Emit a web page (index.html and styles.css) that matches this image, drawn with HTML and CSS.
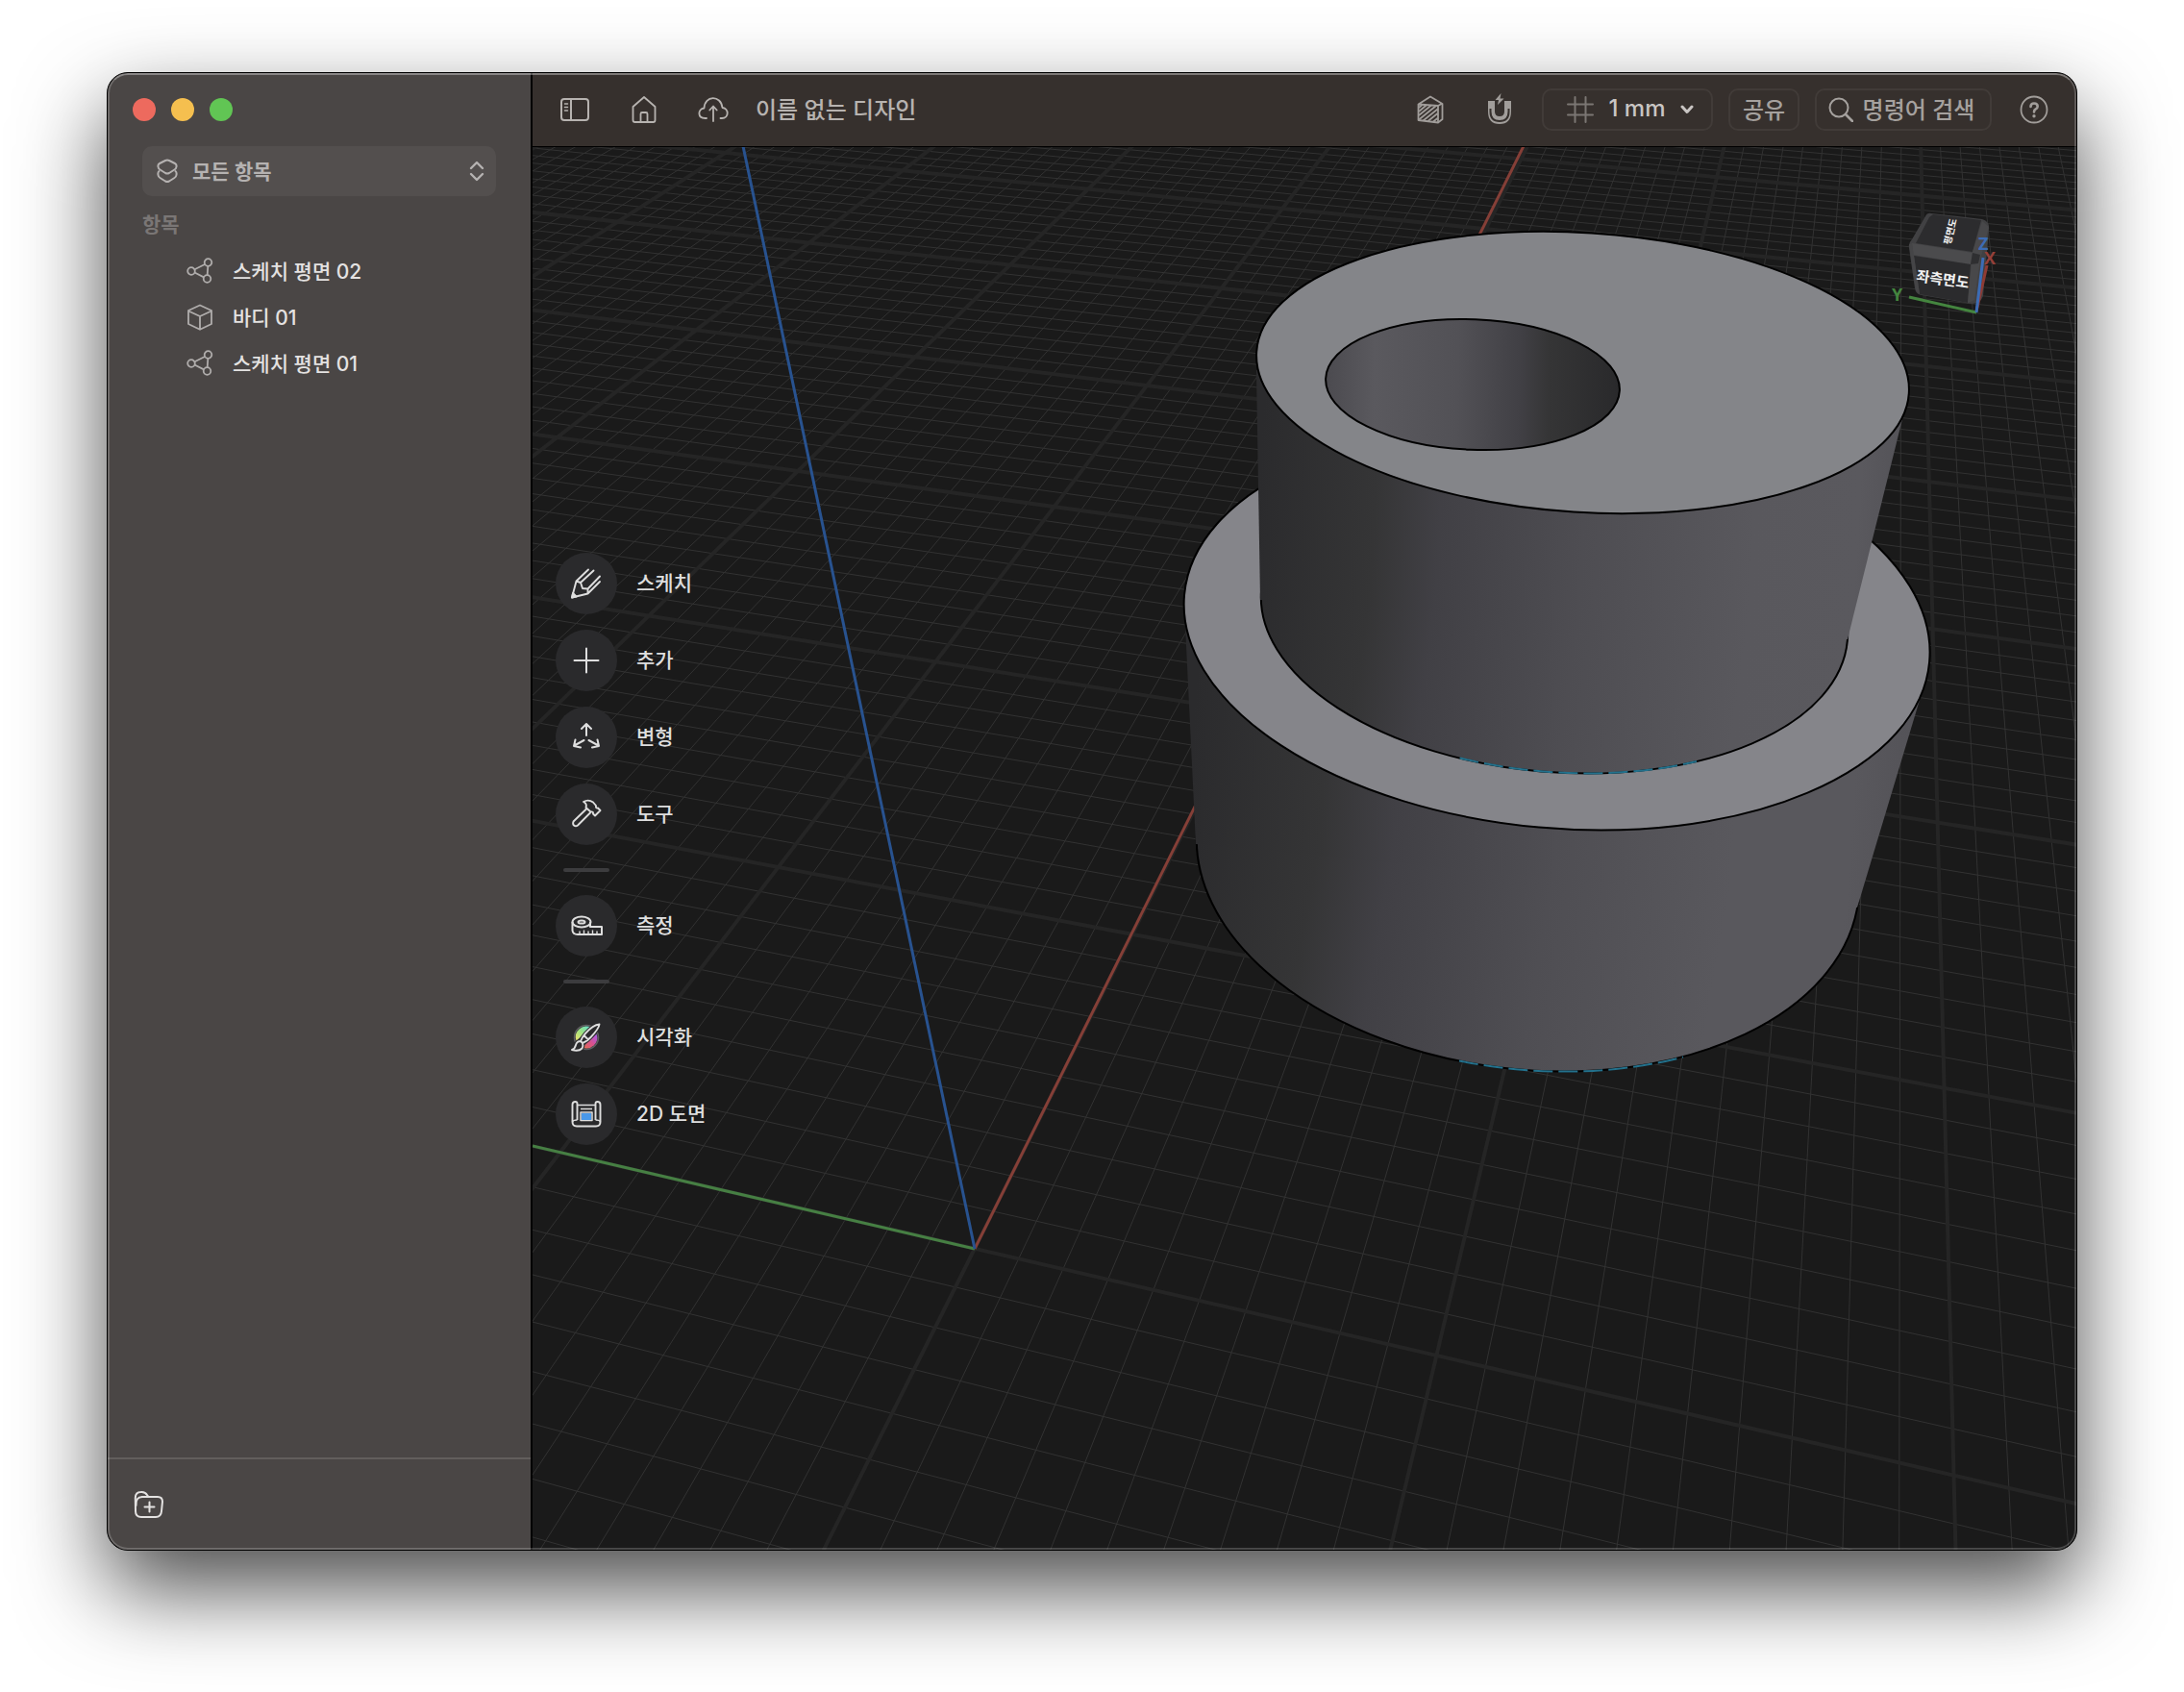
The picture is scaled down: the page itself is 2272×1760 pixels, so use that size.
FILE: index.html
```html
<!DOCTYPE html>
<html lang="ko">
<head>
<meta charset="utf-8">
<title>이름 없는 디자인</title>
<link rel="stylesheet" href="styles.css">
</head>
<body>
<div class="window">
  <aside class="sidebar">
    <div class="traffic">
      <button class="light light-close" aria-label="닫기"></button>
      <button class="light light-min" aria-label="최소화"></button>
      <button class="light light-zoom" aria-label="확대"></button>
    </div>
    <div class="filter">
      <svg class="filter-icon" width="22" height="26" viewBox="0 0 22 26" fill="none" stroke="currentColor" stroke-width="2" stroke-linejoin="round" stroke-linecap="round"><path d="M9 2 Q11 1 13 2 L19 5 Q21 6 20.500 8.500 Q20.300 10.500 18.500 11.500 L13 15 Q11 16 9 15 L3.500 11.500 Q1.700 10.500 1.500 8.500 Q1 6 3 5 Z"/><path d="M2.500 13 Q1 14 1.500 17 Q1.700 19 3.500 20 L9 23.500 Q11 24.500 13 23.500 L18.500 20 Q20.300 19 20.500 17 Q21 14 19.500 13"/></svg>
      <select class="filter-select" aria-label="항목 필터"><option>모든 항목</option></select>
      <svg class="filter-arrows" width="16" height="22" viewBox="0 0 16 22" fill="none" stroke="currentColor" stroke-width="2.400" stroke-linejoin="round" stroke-linecap="round"><path d="M2 8 L8 2 L14 8 M2 14 L8 20 L14 14"/></svg>
    </div>
    <h2 class="section-title">항목</h2>
    <ul class="items">
      <li class="item"><svg width="28" height="28" viewBox="0 0 28 28" fill="none" stroke="currentColor" stroke-width="1.800"><circle cx="5" cy="14" r="3.800"/><circle cx="22.500" cy="5" r="3.800"/><circle cx="21.500" cy="22" r="3.800"/><path d="M8.500 12.300 L19 7 M8.500 15.500 L18 20.400 M22.300 9 L21.700 18"/></svg><span>스케치 평면 02</span></li>
      <li class="item"><svg width="28" height="28" viewBox="0 0 28 28" fill="none" stroke="currentColor" stroke-width="1.800" stroke-linejoin="round"><path d="M14 1.500 L26 7 V21 L14 26.800 L2 21 V7 Z M2 7.500 L14 13 L26 7.500 M14 13 V26.500"/></svg><span>바디 01</span></li>
      <li class="item"><svg width="28" height="28" viewBox="0 0 28 28" fill="none" stroke="currentColor" stroke-width="1.800"><circle cx="5" cy="14" r="3.800"/><circle cx="22.500" cy="5" r="3.800"/><circle cx="21.500" cy="22" r="3.800"/><path d="M8.500 12.300 L19 7 M8.500 15.500 L18 20.400 M22.300 9 L21.700 18"/></svg><span>스케치 평면 01</span></li>
    </ul>
    <footer class="sidebar-footer">
      <button class="plain-button" aria-label="폴더 추가"><svg width="32" height="30" viewBox="0 0 32 30" fill="none" stroke="currentColor" stroke-width="2" stroke-linecap="round" stroke-linejoin="round"><path d="M9 7 H25 Q30 7 30 12 L29 22 Q28.500 28 23 28 H8 Q2 28 2 22 L1.800 8 Q2 2 7.500 2 Q12 1.500 14 5 L15.500 7"/><path d="M2.500 16 Q2 7 9 7 M11.500 17.500 H21.500 M16.500 12.500 V22.500"/></svg></button>
    </footer>
  </aside>

  <main class="main">
    <header class="toolbar">
      <button class="icon-button" aria-label="사이드바"><svg width="30" height="24" viewBox="0 0 30 24" fill="none" stroke="currentColor" stroke-width="2" stroke-linecap="round"><rect x="1" y="1" width="28" height="22" rx="3"/><path d="M11 1 V23"/><path d="M4.500 6 H7.500 M4.500 9.500 H7.500 M4.500 13 H7.500" stroke-width="1.500"/></svg></button>
      <button class="icon-button" aria-label="홈"><svg width="26" height="30" viewBox="0 0 26 30" fill="none" stroke="currentColor" stroke-width="1.800" stroke-linejoin="round"><path d="M1.500 12 L13 2 L24.500 12 V26 Q24.500 28 22.500 28 H3.500 Q1.500 28 1.500 26 Z"/><path d="M9.500 28 V19.500 Q9.500 18 11 18 H15 Q16.500 18 16.500 19.500 V28"/></svg></button>
      <button class="icon-button" aria-label="업로드"><svg width="32" height="28" viewBox="0 0 32 28" fill="none" stroke="currentColor" stroke-width="1.800" stroke-linecap="round" stroke-linejoin="round"><path d="M9 23 H7.500 C-0.500 23 -0.500 13.500 6.500 12.500 C7 -1 24 -1.500 25.500 12 C32.500 13 32.500 23 25 23 H23.500"/><path d="M16 26 V11 M12.300 14.500 L16 10.500 L19.700 14.500"/></svg></button>
      <h1 class="title">이름 없는 디자인</h1>
      <button class="icon-button icon-dim" aria-label="단면 보기"><svg width="28" height="30" viewBox="0 0 28 30" fill="none" stroke="currentColor" stroke-width="1.800" stroke-linejoin="round"><path d="M1.500 9.500 L14 1.500 L26.500 9 V25 L22 28.500 L1.500 26 Z M1.500 9.500 L22 11 L26.500 8.500"/><path d="M22 11 V28 M2 13 L5.500 10 M2 17 L10 10.300 M2 21 L15 10.500 M2 25.500 L20 11 M6.500 26.500 L21.500 14.500 M11.500 27 L21.500 19 M17 27.500 L21.500 24"/></svg></button>
      <button class="icon-button icon-dim" aria-label="스냅"><svg width="28" height="34" viewBox="0 0 28 34"><path d="M15.500 0 L9.500 7 H13 L12 12 L18.500 5.500 H14.500 Z" fill="currentColor"/><path d="M2 8 H9 V19 Q9 24 14 24 Q19 24 19 19 V8 H26 V19 Q26 32 14 32 Q2 32 2 19 Z" fill="currentColor"/><path d="M4.500 16 V19 Q4.500 29 14 29 Q23.500 29 23.500 19 V16" fill="none" stroke="#36302d" stroke-width="2"/></svg></button>
      <button class="box-button grid-button"><svg width="30" height="30" viewBox="0 0 30 30" fill="none" stroke="currentColor" stroke-width="2" stroke-linecap="round"><path d="M9.500 2 V28 M20.500 2 V28 M2 9.500 H28 M2 20.500 H28"/></svg><span class="label">1 mm</span><svg width="14" height="10" viewBox="0 0 14 10" fill="none" stroke="currentColor" stroke-width="3" stroke-linecap="round" stroke-linejoin="round"><path d="M2 2 L7 7.500 L12 2"/></svg></button>
      <button class="box-button share-button"><span class="label">공유</span></button>
      <button class="box-button search-button"><svg width="26" height="26" viewBox="0 0 26 26" fill="none" stroke="currentColor" stroke-width="2" stroke-linecap="round"><circle cx="11" cy="11" r="9.500"/><path d="M18 18 L25 25" stroke-width="2.600"/></svg><span class="label">명령어 검색</span></button>
      <button class="icon-button icon-dim" aria-label="도움말"><svg width="30" height="30" viewBox="0 0 30 30" fill="none" stroke="currentColor" stroke-width="1.800" stroke-linecap="round"><circle cx="15" cy="15" r="13.500"/><path d="M11.500 12 Q11.500 8.500 15 8.500 Q18.700 8.500 18.700 11.800 Q18.700 13.500 16.500 14.700 Q15 15.500 15 17.500" stroke-width="2.600"/><circle cx="15" cy="21.700" r="1" stroke-width="1.400" fill="currentColor"/></svg></button>
    </header>

    <section class="viewport">
      <svg class="scene" viewBox="554 153 1606 1459" preserveAspectRatio="xMidYMid slice" aria-hidden="true">
        <defs>
          <linearGradient id="wallSmall" gradientUnits="userSpaceOnUse" x1="1305" y1="580" x2="1983" y2="620">
            <stop offset="0" stop-color="#2b2b2d"/><stop offset=".18" stop-color="#353536"/><stop offset=".28" stop-color="#414045"/><stop offset=".5" stop-color="#4e4d52"/><stop offset=".76" stop-color="#59585d"/><stop offset=".92" stop-color="#5a595e"/><stop offset="1" stop-color="#525156"/>
          </linearGradient>
          <linearGradient id="wallBig" gradientUnits="userSpaceOnUse" x1="1235" y1="870" x2="2000" y2="915">
            <stop offset="0" stop-color="#2b2b2d"/><stop offset=".18" stop-color="#353536"/><stop offset=".28" stop-color="#414045"/><stop offset=".5" stop-color="#4f4e53"/><stop offset=".74" stop-color="#59585d"/><stop offset=".9" stop-color="#59585d"/><stop offset="1" stop-color="#525156"/>
          </linearGradient>
          <linearGradient id="wallHole" gradientUnits="userSpaceOnUse" x1="1378" y1="405" x2="1685" y2="395">
            <stop offset="0" stop-color="#4b4a4f"/><stop offset=".17" stop-color="#5a595e"/><stop offset=".45" stop-color="#525156"/><stop offset=".66" stop-color="#414045"/><stop offset=".76" stop-color="#353536"/><stop offset="1" stop-color="#29292b"/>
          </linearGradient>
        </defs>
        <path id="grid-minor" class="grid-minor"/>
        <path id="grid-major" class="grid-major"/>
        <path class="axis axis-y" d="M554 1192 L1014 1299"/>
        <path class="axis axis-x" d="M1014 1299 L1585 152"/>
        <path class="axis axis-z" d="M1014 1299 L773 152"/>
        <g class="body">
          <ellipse class="edge" cx="1589.500" cy="897" rx="346" ry="215.300" transform="rotate(6.420 1589.500 897)" fill="url(#wallBig)"/>
          <path d="M1233 650 L1244 878 L1932 944 L1997 728 L2000 700 Z" fill="url(#wallBig)"/>
          <path class="hint" d="M1518 1103.500 A346 215.300 6.420 0 0 1751 1099.500"/>
          <ellipse class="edge" cx="1619.600" cy="653.500" rx="389.100" ry="207.900" transform="rotate(5.160 1619.600 653.500)" fill="#85858a"/>
          <ellipse class="edge" cx="1617" cy="640" rx="306" ry="163" transform="rotate(4.900 1617 640)" fill="url(#wallSmall)"/>
          <path d="M1307 385 L1311 624 L1922 665 L1981 428 Z" fill="url(#wallSmall)"/>
          <path class="hint" d="M1518.600 788.500 A306 163 4.900 0 0 1765 792"/>
          <ellipse class="edge" cx="1646.500" cy="387.500" rx="340" ry="145.300" transform="rotate(3.640 1646.500 387.500)" fill="#848589"/>
          <ellipse class="edge" cx="1532" cy="400" rx="153" ry="67.800" transform="rotate(2.370 1532 400)" fill="url(#wallHole)"/>
        </g>
      </svg>

      <nav class="tools">
        <button class="tool"><span class="tool-disc"><svg width="36" height="36" viewBox="0 0 36 36" fill="none" stroke="currentColor" stroke-width="1.900" stroke-linecap="round" stroke-linejoin="round"><path d="M20 3.500 L7.500 15.500 L3 32.500 L19.500 28.500 L32 16 M25.500 4.500 L12 17 L14 23 L19.500 23.500 L32 10.500 M7.500 15.500 L12 17 M19.500 23.500 V28.500"/><path d="M3 32.500 L4 28 L7.500 31.500 Z" fill="currentColor"/></svg></span><span>스케치</span></button>
        <button class="tool"><span class="tool-disc"><svg width="36" height="36" viewBox="0 0 36 36" fill="none" stroke="currentColor" stroke-width="2" stroke-linecap="round"><path d="M18 5.500 V30.500 M5.500 18 H30.500"/></svg></span><span>추가</span></button>
        <button class="tool"><span class="tool-disc"><svg width="36" height="36" viewBox="0 0 36 36" fill="none" stroke="currentColor" stroke-width="2" stroke-linecap="round" stroke-linejoin="round"><path d="M18 16 V4.500 M13 9 L18 4 L23 9 M15.500 21 L5.500 26.500 M6.500 20.500 L5 27 L12 28.500 M20.500 21 L30.500 26.500 M29.500 20.500 L31 27 L24 28.500"/></svg></span><span>변형</span></button>
        <button class="tool"><span class="tool-disc"><svg width="36" height="36" viewBox="0 0 36 36" fill="none" stroke="currentColor" stroke-width="1.900" stroke-linecap="round" stroke-linejoin="round"><path d="M18 12.500 L4.500 25.500 Q3.500 28 5 29.500 Q7 31 9 29.500 L22 16.500"/><path d="M15 5 Q20 2 25 5.500 L28 9 Q27.500 12 30 11.500 L32.500 14 L27 19.500 L25 17.500 Q25.500 15 22.500 15.500 L17.500 11 Q19 7 15 5 Z"/></svg></span><span>도구</span></button>
        <hr class="tool-rule">
        <button class="tool"><span class="tool-disc"><svg width="36" height="36" viewBox="0 0 36 36" fill="none" stroke="currentColor" stroke-width="2" stroke-linejoin="round"><ellipse cx="13" cy="14" rx="9.500" ry="5.500"/><ellipse cx="13" cy="14" rx="3.500" ry="1.600"/><path d="M3.500 14 V23 Q4 27 9 27 H34 V19 H22 V14"/><path d="M11 27 V23.500 M15.500 27 V22.500 M20 27 V23.500 M24.500 27 V22.500 M29 27 V23.500" stroke-width="1.400"/></svg></span><span>측정</span></button>
        <hr class="tool-rule">
        <button class="tool"><span class="tool-disc"><svg width="36" height="36" viewBox="0 0 36 36" stroke-linejoin="round">
          <defs><linearGradient id="warm" x1="0" y1="1" x2="1" y2="0"><stop offset="0" stop-color="#f2e36b"/><stop offset=".5" stop-color="#9be383"/><stop offset="1" stop-color="#5fd9d3"/></linearGradient><linearGradient id="cool" x1="0" y1="1" x2="1" y2="0"><stop offset="0" stop-color="#e5704a"/><stop offset=".5" stop-color="#d8518f"/><stop offset="1" stop-color="#a45cf0"/></linearGradient></defs>
          <circle cx="18" cy="18" r="12.500" fill="#3a3a3c" stroke="#5e5e61" stroke-width="1.500"/>
          <path d="M7.500 21.500 A11 11 0 0 1 23 8 Z" fill="url(#warm)"/><path d="M28.500 14.500 A11 11 0 0 1 14 28.500 Z" fill="url(#cool)"/>
          <path d="M31.500 4.500 Q25 5 17 14 Q13.500 18 12 22 Q8 22 7 26 Q6 30 3 31 Q10 33 13.500 29.500 Q15 27 14 24 Q19 22 22.500 18 Q31 9 31.500 4.500 Z" fill="#2b2b2d" stroke="#2b2b2d" stroke-width="4"/>
          <path d="M31.500 4.500 Q25 5 17 14 Q13.500 18 12 22 Q8 22 7 26 Q6 30 3 31 Q10 33 13.500 29.500 Q15 27 14 24 Q19 22 22.500 18 Q31 9 31.500 4.500 Z M12 22 L14 24 M15.500 16 L20 20.500" fill="none" stroke="currentColor" stroke-width="1.900"/></svg></span><span>시각화</span></button>
        <button class="tool"><span class="tool-disc"><svg width="36" height="36" viewBox="0 0 36 36" fill="none" stroke="currentColor" stroke-width="1.900" stroke-linejoin="round"><path d="M8.500 24 V7 Q8.500 5 6.500 5 Q3.500 5 3.500 8 V26 Q3.500 30.500 8 30.500 H28 Q32.500 30.500 32.500 26 V8 Q32.500 5 29.500 5 Q27.500 5 27.500 7 V24"/><path d="M3.500 26 Q4 24 8.500 24 M32.500 26 Q32 24 27.500 24 M8.500 8.500 H27.500 M12 12.500 H24 M12 24.500 V16 H24 V24.500 Z" stroke-width="1.500"/><rect x="13" y="17" width="10" height="7" fill="#4a98e8" stroke="none"/></svg></span><span>2D 도면</span></button>
      </nav>

      <svg class="view-cube" width="120" height="120" viewBox="0 0 120 120" role="img" aria-label="보기 방향">
        <path d="M47 12 L100 18 Q108 20 107 29 L101 98 Q98 106 89 106 L37 97 Q31 96 30 90 L24 48 Q23 43 27 39 L41 15 Q43 11 47 12 Z" fill="#414143"/>
        <path d="M49 13 L99 19 L90 52 L31 43 L45 16 Z" fill="#2c2c2e"/>
        <path d="M27 43 L90 53 L88 65 L28 55 Z" fill="#4b4b4d"/>
        <path d="M29 56 L88 65 L85 105 L35 96 Z" fill="#2b2b2d"/>
        <path d="M24 44 L27 43 L29 56 L35 96 L31 92 Z" fill="#454547"/>
        <path d="M90 52 L100 20 L107 26 L98 60 L92 102 L85 105 Z" fill="#48484a"/>
        <path d="M90 53 L98 55 L96 64 L88 65 Z" fill="#2f2f31"/>
        <text class="cube-text" x="31" y="82" transform="rotate(8 31 82)">좌측면도</text>
        <text class="cube-text cube-top" x="67" y="45" transform="rotate(-76 67 45)">평면도</text>
        <path d="M94 114 L105 66" stroke="#8f3b34" stroke-width="3"/>
        <path d="M24 99 L94 115" stroke="#44853f" stroke-width="3"/>
        <path d="M94 115 L101 58" stroke="#3c6cb5" stroke-width="3"/>
        <text class="axis-text" x="102" y="65" fill="#94403a">X</text>
        <text class="axis-text" x="96" y="50" fill="#3c6cb5">Z</text>
        <text class="axis-text" x="6" y="103" fill="#44853f">Y</text>
      </svg>
    </section>
  </main>
</div>
<script src="grid.js"></script>
</body>
</html>
```
FILE: styles.css
```css
* { box-sizing: border-box; }

html, body { margin: 0; }

body {
  display: flex;
  min-height: 100vh;
  padding: 75px 111px 147px;
  background: #fff;
  font-family: Inter, "Noto Sans CJK KR", sans-serif;
  color: #e4e2e1;
}

button, select {
  margin: 0;
  padding: 0;
  border: 0;
  background: none;
  color: inherit;
  font: inherit;
}

svg { display: block; flex: none; }

.window {
  position: relative;
  display: flex;
  flex: 1;
  overflow: hidden;
  border: 1px solid #000;
  border-radius: 22px;
  background: #000;
  box-shadow: 0 40px 90px rgba(0, 0, 0, .7);
}

/* light rim drawn over the window's content */
.window::after {
  content: "";
  position: absolute;
  inset: 0;
  border: 2px solid rgba(255, 255, 255, .2);
  border-top-color: rgba(255, 255, 255, .35);
  border-radius: 21px;
  pointer-events: none;
}

/* sidebar */
.sidebar {
  display: flex;
  flex-direction: column;
  flex: none;
  width: 442px;
  border-right: 2px solid #000;
  background: #4a4645;
}

.traffic {
  display: flex;
  align-items: center;
  gap: 16px;
  height: 76px;
  padding-left: 26px;
}

.light { width: 24px; height: 24px; border-radius: 50%; }
.light-close { background: #ed6a5e; }
.light-min { background: #f5bf4f; }
.light-zoom { background: #61c554; }

.filter {
  position: relative;
  display: flex;
  margin: 0 36px;
  color: #b5b2b1;
}

.filter-select {
  appearance: none;
  flex: 1;
  height: 52px;
  padding-left: 52px;
  border-radius: 10px;
  background: #534f4e;
  font-size: 21px;
  font-weight: 600;
}

.filter-icon { position: absolute; left: 15px; top: 13px; }
.filter-arrows { position: absolute; right: 12px; top: 15px; }

.section-title {
  margin: 14px 36px 6px;
  color: #7a7675;
  font-size: 21px;
  font-weight: 600;
  line-height: 32px;
}

.items { flex: 1; margin: 0; padding: 2px 0 0 82px; list-style: none; }

.item {
  display: flex;
  align-items: center;
  gap: 20px;
  height: 48px;
  font-size: 21px;
  font-weight: 500;
}

.item span { padding-bottom: 2px; }
.item svg { color: #b0adac; }

.sidebar-footer {
  display: flex;
  align-items: center;
  height: 96px;
  padding-left: 27px;
  border-top: 2px solid #625e5c;
}

/* toolbar */
.main { display: flex; flex-direction: column; flex: 1; min-width: 0; }

.toolbar {
  display: flex;
  align-items: center;
  gap: 16px;
  height: 77px;
  padding: 0 16px;
  border-bottom: 1px solid #000;
  background: #36302d;
  color: #b7b3b0;
  font-size: 24px;
}

.icon-button { display: flex; justify-content: center; flex: none; width: 56px; }
.icon-dim { color: #a19d9a; }

.title {
  flex: 1;
  margin: 0;
  padding-bottom: 3px;
  font-size: 24px;
  font-weight: 500;
  white-space: nowrap;
}

.label { padding-bottom: 3px; }

.box-button {
  display: flex;
  align-items: center;
  justify-content: center;
  gap: 10px;
  height: 44px;
  border: 2px solid #413b38;
  border-radius: 10px;
  color: #a5a19e;
  font-weight: 500;
  white-space: nowrap;
}

.grid-button { width: 178px; gap: 15px; padding-left: 4px; color: #c9c5c3; }
.grid-button svg:first-child { color: #7b7673; }
.share-button { width: 74px; }
.search-button { width: 184px; padding-right: 4px; }

/* 3D viewport */
.viewport {
  position: relative;
  display: flex;
  align-items: center;
  flex: 1;
  padding-left: 24px;
  background: #1a1a1a;
}

.scene { position: absolute; inset: 0; width: 100%; height: 100%; }

.grid-minor { fill: none; stroke: #323232; stroke-width: 1px; }
.grid-major { fill: none; stroke: #252525; stroke-width: 4px; }
.axis { fill: none; stroke-width: 3px; }
.axis-x { stroke: #853f37; }
.axis-y { stroke: #467f43; }
.axis-z { stroke: #28528f; }
.edge { stroke: #000; stroke-width: 2px; }
.hint { fill: none; stroke: #23718c; stroke-width: 2px; stroke-dasharray: 20 6; }

.tools { position: relative; display: flex; flex-direction: column; gap: 16px; }

.tool {
  display: flex;
  align-items: center;
  gap: 20px;
  color: #dedede;
  font-size: 21px;
  font-weight: 500;
}

.tool-disc {
  display: flex;
  align-items: center;
  justify-content: center;
  width: 64px;
  height: 64px;
  border-radius: 50%;
  background: #2a2a2c;
}

.tool-disc + span { padding-bottom: 4px; }

.tool-rule {
  width: 48px;
  height: 4px;
  margin: 8px;
  border: 0;
  border-radius: 2px;
  background: #3c3c3e;
}

.view-cube { position: absolute; top: 57px; right: 78px; }
.cube-text { fill: #f2f2f2; font-size: 15px; font-weight: 700; }
.cube-top { font-size: 10px; }
.axis-text { font-family: "Open Sans", sans-serif; font-size: 18px; font-weight: 700; }
```
FILE: grid.js
```js
// Ground plane: project each line of the unit grid into screen space.
function project(u, v) {
  const w = 1 - 0.005368 * u + 0.020466 * v;
  return [
    (1014 + 40.015 * u + 40.499 * v) / w,
    (1298.7 + 3.5575 * u - 12.803 * v) / w
  ];
}

const U = [-70, 50];
const V = [-12, 110];
const paths = { minor: '', major: '' };

function addLine(index, a, b) {
  const kind = index % 10 === 0 ? 'major' : 'minor';
  paths[kind] += 'M' + project(...a).map(n => n.toFixed(1)) + 'L' + project(...b).map(n => n.toFixed(1));
}

for (let u = U[0]; u <= U[1]; u++) addLine(u, [u, V[0]], [u, V[1]]);
for (let v = V[0]; v <= V[1]; v++) addLine(v, [U[0], v], [U[1], v]);

document.getElementById('grid-minor').setAttribute('d', paths.minor);
document.getElementById('grid-major').setAttribute('d', paths.major);
```
